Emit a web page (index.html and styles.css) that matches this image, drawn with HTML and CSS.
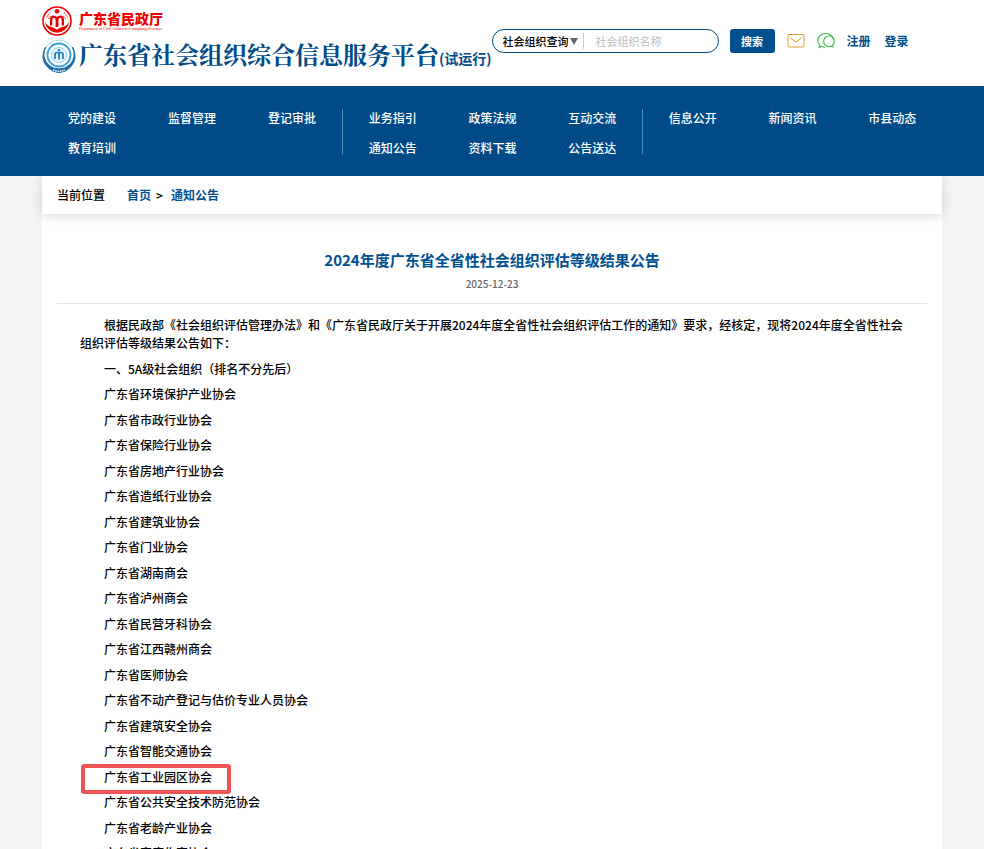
FILE: index.html
```html
<!DOCTYPE html>
<html lang="zh-CN">
<head>
  <meta charset="UTF-8">
  <title>广东省社会组织综合信息服务平台</title>
  <link rel="stylesheet" href="styles.css">
</head>
<body>
  <header class="header">
    <div class="container header-inner">
      <div class="brand">
        <div class="brand-row">
          <svg class="logo-dept" viewBox="0 0 30 30" aria-hidden="true">
            <circle cx="15" cy="15" r="14" fill="#fff" stroke="#ee0000" stroke-width="1.6"/>
            <circle cx="15" cy="5.200" r="2.300" fill="#ee0000"/>
            <path d="M8 19.500v-5.500q0-4.500 3.600-4.500 2.400 0 3.400 1.800 1-1.800 3.400-1.800 3.600 0 3.600 4.500v5.500h-2.300v-5.500q0-2.200-1.500-2.200-1.800 0-1.800 2.200v7h-2.800v-7q0-2.200-1.800-2.200-1.500 0-1.500 2.200v5.500z" fill="#ee0000"/>
            <path d="M3 15.500q1.500 4 5 5 4.500 1 7 3.200 2.500-2.200 7-3.200 3.500-1 5-5-.5 5.500-4.500 8.500-3.500 2.400-7.500 2.800-4-.4-7.500-2.800-4-3-4.500-8.500z" fill="#ee0000"/>
            <path d="M4.500 11.500l3.500-5M22 6.500l3.500 5M6.500 13l2-3M21.500 10l2 3" stroke="#ee0000" stroke-dasharray="1.500 1"/>
          </svg>
          <div class="dept">
            <div class="dept-name">广东省民政厅</div>
            <div class="dept-en">Department of Civil Affairs of Guangdong Province</div>
          </div>
        </div>
        <div class="brand-row">
          <svg class="logo-site" viewBox="0 0 34 34" aria-hidden="true">
            <circle cx="17" cy="16.500" r="15.500" fill="#fff" stroke="#a9d8f0"/>
            <path d="M3.500 8q-4.500 9.500 2.500 17.500 4.500 4.500 11 4.500t11-4.500q7-8 2.500-17.500 6 11.500-2 20-5 5.500-11.500 5.500t-11.500-5.500q-8-8.500-2-20z" fill="#1768a8" stroke="#1768a8"/>
            <circle cx="17" cy="16" r="11.500" fill="none" stroke="#3a9fd6" stroke-width="1.800"/>
            <circle cx="17" cy="16" r="7.500" fill="#e6f5fc" stroke="#8fd0ee"/>
            <path d="M13 20v-4.500q0-2 2-2 1.500 0 2 1.200.5-1.200 2-1.200 2 0 2 2v4.500M17 14.500v6" fill="none" stroke="#1b78bb" stroke-width="1.700"/>
            <circle cx="17" cy="11.300" r="1.200" fill="#1b78bb"/>
            <path d="M11 31q6 2.400 12 0" fill="none" stroke="#fff" stroke-width="1.500" stroke-dasharray="1.500 .8"/>
          </svg>
          <h1 class="site-name">广东省社会组织综合信息服务平台<span class="site-trial">(试运行)</span></h1>
        </div>
      </div>

      <form class="search">
        <div class="search-box">
          <select class="search-type" aria-label="查询类型">
            <option>社会组织查询</option>
          </select>
          <svg class="arrow" viewBox="0 0 8 7" aria-hidden="true"><path d="M0 0h8l-4 7z" fill="#666"/></svg>
          <input class="search-input" type="text" placeholder="社会组织名称" aria-label="社会组织名称">
        </div>
        <button class="search-btn" type="submit">搜索</button>
      </form>

      <div class="user-links">
        <a href="#" aria-label="邮箱">
          <svg class="icon" viewBox="0 0 18 18" fill="none" stroke="#e0a030"><rect x="1" y="2.500" width="16" height="12.500" rx="1"/><path d="M3.500 6l5.500 4 5.500-4"/></svg>
        </a>
        <a href="#" aria-label="微信">
          <svg class="icon" viewBox="0 0 18 18" fill="none" stroke="#3db54a" stroke-width="1.100"><path d="M16.800 7.500q-1-3.300-3.800-5-2-1-4.300-1-3.300 0-5.700 2.200-2.200 2.200-2.200 5 0 2.600 2 4.600l-.7 2 2.600-.8q1.500.7 3.500.7"/><path d="M16 14.800l-.4-1.600q1.700-1.600 1.700-3.900 0-2.200-1.500-3.800-1.600-1.500-3.800-1.500t-3.800 1.500q-1.500 1.600-1.500 3.800t1.500 3.800q1.600 1.500 3.800 1.500 1.100 0 2-.4z"/></svg>
        </a>
        <a href="#" class="user-link">注册</a>
        <a href="#" class="user-link">登录</a>
      </div>
    </div>
  </header>

  <nav class="nav">
    <div class="container nav-inner">
      <div class="nav-group">
        <a href="#">党的建设</a>
        <a href="#">监督管理</a>
        <a href="#">登记审批</a>
        <a href="#">教育培训</a>
      </div>
      <div class="nav-group">
        <a href="#">业务指引</a>
        <a href="#">政策法规</a>
        <a href="#">互动交流</a>
        <a href="#">通知公告</a>
        <a href="#">资料下载</a>
        <a href="#">公告送达</a>
      </div>
      <div class="nav-group">
        <a href="#">信息公开</a>
        <a href="#">新闻资讯</a>
        <a href="#">市县动态</a>
      </div>
    </div>
  </nav>

  <div class="container page">
    <div class="crumbs">
      <span class="crumbs-label">当前位置</span>
      <a href="#">首页</a>
      <span class="crumbs-sep">&gt;</span>
      <a href="#">通知公告</a>
    </div>

    <main class="article">
      <h2 class="article-title">2024年度广东省全省性社会组织评估等级结果公告</h2>
      <div class="article-date">2025-12-23</div>
      <div class="article-body">
        <p class="intro">根据民政部《社会组织评估管理办法》和《广东省民政厅关于开展2024年度全省性社会组织评估工作的通知》要求，经核定，现将2024年度全省性社会组织评估等级结果公告如下：</p>
        <div class="list">
          <p>一、5A级社会组织（排名不分先后）</p>
          <p>广东省环境保护产业协会</p>
          <p>广东省市政行业协会</p>
          <p>广东省保险行业协会</p>
          <p>广东省房地产行业协会</p>
          <p>广东省造纸行业协会</p>
          <p>广东省建筑业协会</p>
          <p>广东省门业协会</p>
          <p>广东省湖南商会</p>
          <p>广东省泸州商会</p>
          <p>广东省民营牙科协会</p>
          <p>广东省江西赣州商会</p>
          <p>广东省医师协会</p>
          <p>广东省不动产登记与估价专业人员协会</p>
          <p>广东省建筑安全协会</p>
          <p>广东省智能交通协会</p>
          <p class="marked">广东省工业园区协会</p>
          <p>广东省公共安全技术防范协会</p>
          <p>广东省老龄产业协会</p>
          <p>广东省家庭作家协会</p>
        </div>
      </div>
    </main>
  </div>
</body>
</html>
```
FILE: styles.css
```css
*,
*::after {
  box-sizing: border-box;
}

body {
  margin: 0;
  font-family: "Noto Sans CJK SC", sans-serif;
  font-size: 12px;
  font-weight: 500;
  line-height: 18px;
  color: #000;
  background: #f4f4f4;
}

a {
  color: #00508f;
  text-decoration: none;
}

h1, h2, p {
  margin: 0;
}

.container {
  max-width: 900px;
  margin: 0 auto;
}

/* header */
.header {
  background: #fff;
}

.header-inner {
  display: flex;
  align-items: flex-start;
  height: 86px;
}

.brand {
  padding-top: 5px;
}

.brand-row {
  display: flex;
  align-items: center;
}

.logo-dept {
  width: 30px;
  height: 32px;
  margin-right: 7px;
}

.dept-name {
  color: #ee0000;
  font-size: 14px;
  font-weight: 900;
  line-height: 16px;
}

.dept-en {
  color: #ee0000;
  font-family: "Liberation Serif", serif;
  font-size: 4px;
  line-height: 6px;
  white-space: nowrap;
}

.logo-site {
  flex: none;
  width: 34px;
  height: 34px;
  margin-right: 3px;
}

.site-name {
  color: #004b87;
  font-family: "Noto Serif CJK SC", "Noto Sans CJK SC", serif;
  font-size: 24px;
  font-weight: 700;
  line-height: 34px;
  white-space: nowrap;
}

.site-trial {
  font-family: "Noto Sans CJK SC", sans-serif;
  font-size: 14px;
}

.search {
  display: flex;
  align-items: center;
  gap: 11px;
  padding-top: 29px;
}

.search-box {
  display: flex;
  align-items: center;
  width: 227px;
  height: 24px;
  padding-left: 10px;
  border: 1px solid #004b87;
  border-radius: 12px;
}

.search-type {
  width: 67px;
  padding: 0;
  border: 0;
  appearance: none;
  background: none;
  color: #000;
  font: 500 11px/18px "Noto Sans CJK SC", sans-serif;
}

.arrow {
  width: 8px;
  height: 7px;
}

.search-input {
  flex: 1;
  min-width: 0;
  height: 16px;
  margin: 0 12px 0 5px;
  padding: 0 0 0 12px;
  border: 0;
  border-left: 1px solid #ccc;
  outline: none;
  background: none;
  font: 400 11px/16px "Noto Sans CJK SC", sans-serif;
}

.search-input::placeholder {
  color: #bbb;
}

.search-btn {
  width: 45px;
  height: 24px;
  padding: 0;
  border: 0;
  border-radius: 3px;
  background: #00508f;
  color: #fff;
  font: 700 11px/24px "Noto Sans CJK SC", sans-serif;
}

.user-links {
  display: flex;
  align-items: center;
  gap: 12px;
  padding: 32px 0 0 12px;
}

.icon {
  display: block;
  width: 18px;
  height: 18px;
}

.user-link {
  font-weight: 700;
  white-space: nowrap;
}

.user-link + .user-link {
  margin-left: 2px;
}

/* main menu */
.nav {
  background: #004b87;
}

.nav-inner {
  display: grid;
  grid-template-columns: repeat(3, 1fr);
  padding: 23px 0 22px;
}

.nav-group {
  display: grid;
  grid-template-columns: repeat(3, 1fr);
  align-items: start;
  row-gap: 12px;
  height: 45px;
  text-align: center;
}

.nav-group + .nav-group {
  border-left: 1px solid #4c92bd;
}

.nav-group a {
  color: #fff;
}

/* breadcrumbs */
.crumbs {
  position: relative;
  display: flex;
  padding: 10px 15px;
  background: #fff;
  box-shadow: 0 2px 10px rgba(0, 0, 0, 0.16);
}

.crumbs-label {
  margin-right: 22px;
}

.crumbs a {
  font-weight: 700;
}

.crumbs-sep {
  margin: 0 8px 0 5px;
}

/* keeps the crumbs shadow off the menu bar */
.nav {
  position: relative;
  z-index: 1;
}

/* article */
.article {
  padding: 34px 15px 0;
  background: #fff;
}

.article-title {
  color: #00508f;
  font-size: 15px;
  font-weight: 700;
  line-height: 24px;
  text-align: center;
}

.article-date {
  padding: 3px 0 10px;
  border-bottom: 1px solid #e5e5e5;
  color: #666;
  font-size: 10px;
  text-align: center;
}

.article-body {
  padding: 12px 23px 0;
}

.intro {
  text-indent: 24px;
}

.list {
  display: grid;
  grid-auto-rows: 25px 26px;
  justify-items: start;
  margin-top: 8px;
}

.list p {
  padding-left: 24px;
}

.marked {
  position: relative;
}

/* red frame round the association of interest */
.marked::after {
  content: "";
  position: absolute;
  top: -4px;
  left: 1px;
  width: 150px;
  height: 30px;
  border: 4px solid #f05555;
  border-radius: 3px;
}
```
